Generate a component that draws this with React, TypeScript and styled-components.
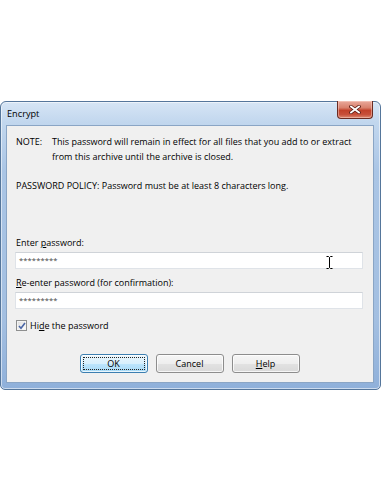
import React from "react";
import styled, { createGlobalStyle } from "styled-components";

const GlobalStyle = createGlobalStyle`
  html, body { margin: 0; padding: 0; background: #ffffff; }
  body { font-family: "Open Sans", "Noto Sans", sans-serif; color: #000; }
  * { box-sizing: border-box; }
`;

const Page = styled.div`
  width: 381px;
  height: 492px;
  padding-top: 101px;
`;

const Window = styled.div`
  width: 381px;
  height: 289px;
  border: 1px solid #55769b;
  border-radius: 6px 6px 5px 5px;
  background: linear-gradient(180deg, #d6e5f5 0px, #c2d7ee 20px, #aac5e5 70px, #a3bfe1 220px, #8fb0da 100%);
  box-shadow: inset 0 0 0 1px rgba(255, 255, 255, 0.55);
  padding: 0 6px 6px 5px;
  display: flex;
  flex-direction: column;
`;

const TitleBar = styled.div`
  height: 23px;
  display: flex;
  justify-content: space-between;
  align-items: flex-start;
`;

const Title = styled.div`
  font-size: 9.2px;
  line-height: 23px;
  padding-left: 1px;
  color: #000;
`;

const CloseButton = styled.div`
  width: 36px;
  height: 18px;
  margin-top: -1px;
  margin-right: 1px;
  border: 1px solid #6b2b22;
  border-top: none;
  border-radius: 0 0 4px 4px;
  background: linear-gradient(180deg, #e9a99b 0%, #d8806c 40%, #c2412a 55%, #c8503a 80%, #dc8a72 100%);
  box-shadow: inset 0 0 0 1px rgba(255, 220, 210, 0.45);
  display: flex;
  align-items: center;
  justify-content: center;
`;

const Client = styled.div`
  flex: 1;
  border: 1px solid #8aa5c5;
  background: #f0f0f0;
  padding: 0 10px 0 9px;
  display: flex;
  flex-direction: column;
  font-size: 9px;
  line-height: 15px;
`;

const NoteBlock = styled.div`
  margin-top: 8px;
  display: grid;
  grid-template-columns: 36px 1fr;
`;

const Text = styled.div<{ $top?: number }>`
  margin-top: ${(p) => p.$top ?? 0}px;
  white-space: nowrap;
`;

const Input = styled.div`
  position: relative;
  margin-top: 2px;
  margin-left: -1px;
  height: 17px;
  background: #ffffff;
  border: 1px solid #dfe3e8;
  border-top-color: #cfd3d8;
  padding-left: 3px;
  font-size: 7.6px;
  line-height: 15px;
  color: #444;
  letter-spacing: 0.1px;
`;

const Cursor = styled.svg`
  position: absolute;
  left: 310px;
  top: 3px;
`;

const CheckRow = styled.div`
  margin-top: 9px;
  display: flex;
  align-items: center;
  gap: 3px;
`;

const CheckBox = styled.div`
  width: 11px;
  height: 11px;
  border: 1px solid #8e8f8f;
  background: linear-gradient(135deg, #dcdcdc, #ffffff);
  box-shadow: inset 0 0 0 1px #f4f4f4;
  display: flex;
  align-items: center;
  justify-content: center;
`;

const ButtonRow = styled.div`
  margin-top: 21px;
  display: flex;
  justify-content: center;
  gap: 8px;
`;

const Button = styled.div<{ $default?: boolean }>`
  width: 68px;
  height: 19px;
  border: 1px solid ${(p) => (p.$default ? "#3c7fb1" : "#8d8d8d")};
  border-radius: 3px;
  background: ${(p) =>
    p.$default
      ? "linear-gradient(180deg, #eaf6fd 0%, #d9f0fc 50%, #bee6fd 51%, #a7d9f5 100%)"
      : "linear-gradient(180deg, #f6f6f6 0%, #eeeeee 50%, #e2e2e2 51%, #d9d9d9 100%)"};
  box-shadow: inset 0 0 0 1px rgba(255, 255, 255, 0.75);
  display: flex;
  align-items: center;
  justify-content: center;
  font-size: 9px;
  padding: 2px;
`;

const FocusRect = styled.div`
  width: 100%;
  height: 100%;
  border: 1px dotted #222;
  display: flex;
  align-items: center;
  justify-content: center;
`;

export default function App() {
  return (
    <Page>
      <GlobalStyle />
      <Window>
        <TitleBar>
          <Title>Encrypt</Title>
          <CloseButton>
            <svg width="12" height="9" viewBox="0 0 12 9">
              <path d="M2 1.5 L10 7.5 M10 1.5 L2 7.5" stroke="#5a1a12" strokeWidth="3.4" strokeLinecap="square" />
              <path d="M2 1.5 L10 7.5 M10 1.5 L2 7.5" stroke="#ffffff" strokeWidth="1.8" strokeLinecap="square" />
            </svg>
          </CloseButton>
        </TitleBar>
        <Client>
          <NoteBlock>
            <Text>NOTE:</Text>
            <div>
              <Text>This password will remain in effect for all files that you add to or extract</Text>
              <Text>from this archive until the archive is closed.</Text>
            </div>
          </NoteBlock>
          <Text $top={14}>PASSWORD POLICY: Password must be at least 8 characters long.</Text>
          <Text $top={42}>
            Enter <u>p</u>assword:
          </Text>
          <Input>
            *********
            <Cursor width="7" height="13" viewBox="0 0 7 13">
              <path d="M0.5 0.5 H2.5 L3.5 1.5 L4.5 0.5 H6.5 M3.5 1.5 V11.5 M0.5 12.5 H2.5 L3.5 11.5 L4.5 12.5 H6.5" stroke="#000" strokeWidth="1" fill="none" />
            </Cursor>
          </Input>
          <Text $top={6}>
            <u>R</u>e-enter password (for confirmation):
          </Text>
          <Input>*********</Input>
          <CheckRow>
            <CheckBox>
              <svg width="8" height="8" viewBox="0 0 8 8">
                <path d="M1 4 L3 6.3 L7 1" stroke="#4a66a6" strokeWidth="1.6" fill="none" />
              </svg>
            </CheckBox>
            <span>
              Hi<u>d</u>e the password
            </span>
          </CheckRow>
          <ButtonRow>
            <Button $default>
              <FocusRect>OK</FocusRect>
            </Button>
            <Button>Cancel</Button>
            <Button>
              <span>
                <u>H</u>elp
              </span>
            </Button>
          </ButtonRow>
        </Client>
      </Window>
    </Page>
  );
}
